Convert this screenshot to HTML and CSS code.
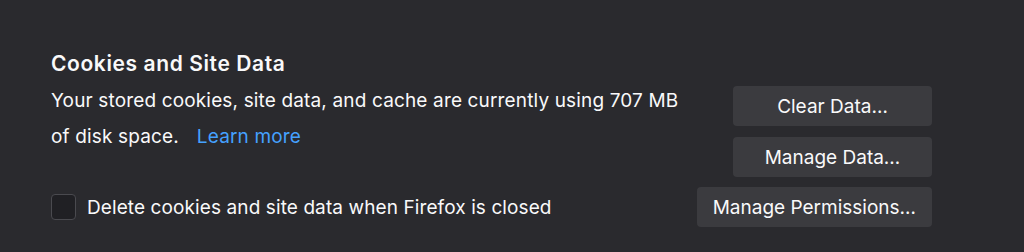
FILE: index.html
```html
<!DOCTYPE html>
<html lang="en">
<head>
  <meta charset="UTF-8" />
  <meta name="viewport" content="width=device-width, initial-scale=1.0"/>
  <title>Cookies and Site Data</title>
  <link rel="stylesheet" href="styles.css">
</head>
<body>
  <div class="section">
    <h2>Cookies and Site Data</h2>
    <div class="row">
      <p class="description">
        Your stored cookies, site data, and cache are currently using 707 MB
        of disk space.<a href="#" class="learn-more">Learn more</a>
      </p>
      <div class="actions">
        <button type="button" class="btn btn-fixed">Clear Data…</button>
        <button type="button" class="btn btn-fixed">Manage Data…</button>
      </div>
    </div>
    <div class="row row-center">
      <label class="check">
        <input type="checkbox" />
        <span class="box"></span>
        Delete cookies and site data when Firefox is closed
      </label>
      <button type="button" class="btn">Manage Permissions…</button>
    </div>
  </div>
</body>
</html>
```

FILE: styles.css
```css
* {
  box-sizing: border-box;
}

body {
  margin: 0;
  background: #2a2a2e;
  color: #f9f9fa;
  font-family: Inter, 'Noto Sans', sans-serif;
}

.section {
  padding: 50px 92px 0 51px;
}

h2 {
  margin: 0 0 8px;
  font-size: 21px;
  font-weight: 600;
  line-height: 28px;
  letter-spacing: 0.6px;
}

.row {
  display: flex;
  justify-content: space-between;
  align-items: flex-start;
}

.row-center {
  align-items: center;
  margin-top: 10px;
}

.description {
  margin: -3px 0 0;
  max-width: 650px;
  font-size: 19px;
  line-height: 36px;
  letter-spacing: 0.15px;
}

.learn-more {
  color: #45a1ff;
  text-decoration: none;
  margin-left: 18px;
}

.actions {
  display: flex;
  flex-direction: column;
  gap: 11px;
}

.btn {
  height: 40px;
  padding: 0 16px;
  background: #3b3b3f;
  color: #f9f9fa;
  border: none;
  border-radius: 4px;
  font-family: inherit;
  font-size: 19px;
}

.btn-fixed {
  width: 199px;
}

.check {
  display: flex;
  align-items: center;
  gap: 11px;
  font-size: 19px;
  letter-spacing: 0.1px;
}

.check input {
  display: none;
}

.box {
  width: 25px;
  height: 26px;
  background: #202024;
  border: 1px solid #4a4a4f;
  border-radius: 4px;
}
```
